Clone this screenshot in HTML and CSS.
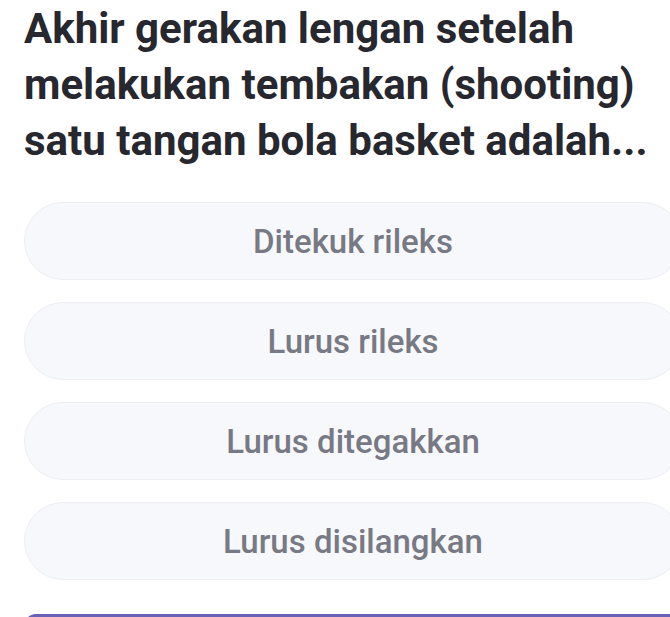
FILE: index.html
```html
<!DOCTYPE html>
<html lang="id">
<head>
<meta charset="utf-8">
<title>Soal</title>
<link rel="stylesheet" href="styles.css">
</head>
<body>
<main class="quiz">
  <h1 class="question">Akhir gerakan lengan setelah melakukan tembakan (shooting) satu tangan bola basket adalah...</h1>
  <div class="options">
    <button class="option">Ditekuk rileks</button>
    <button class="option">Lurus rileks</button>
    <button class="option">Lurus ditegakkan</button>
    <button class="option">Lurus disilangkan</button>
  </div>
  <button class="submit" aria-label="Kirim"></button>
</main>
</body>
</html>
```

FILE: styles.css
```css
html, body {
  margin: 0;
  padding: 0;
  overflow: hidden;
  background: #ffffff;
}

.quiz {
  padding: 1px 0 0 24px;
  width: 658px;
  font-family: Roboto, "Noto Sans", sans-serif;
}

.question {
  margin: 0;
  font-size: 42px;
  line-height: 56px;
  font-weight: 700;
  color: #27272f;
  width: 640px;
}

.options {
  margin-top: 33px;
  display: flex;
  flex-direction: column;
  gap: 22px;
}

.option {
  display: block;
  width: 658px;
  height: 78px;
  border: 1.5px solid #eceef2;
  border-radius: 39px;
  background: #f7f8fb;
  color: #777984;
  font-family: Roboto, "Noto Sans", sans-serif;
  font-size: 33px;
  font-weight: 500;
  text-align: center;
  padding: 0;
}

.submit {
  display: block;
  margin-top: 34px;
  width: 658px;
  height: 60px;
  border: none;
  border-radius: 12px;
  background: #6a62b6;
}
```
